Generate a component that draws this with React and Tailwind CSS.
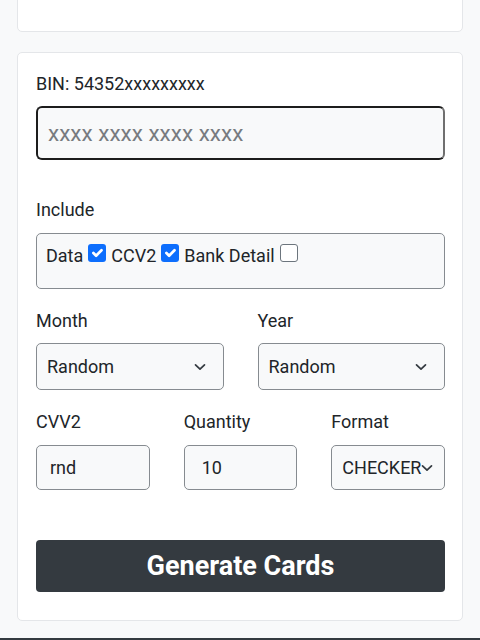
import React from 'react';

const Chevron = ({ right = 'right-[17px]' }) => (
  <svg
    className={`absolute ${right} top-1/2 -translate-y-1/2`}
    width="12"
    height="8"
    viewBox="0 0 12 8"
    fill="none"
    stroke="#343a40"
    strokeWidth="1.7"
    strokeLinecap="round"
    strokeLinejoin="round"
  >
    <path d="M1.5 1.8l4.5 4.4 4.5-4.4" />
  </svg>
);

const Check = ({ checked }) =>
  checked ? (
    <span className="mt-[2px] w-[18px] h-[18px] rounded-[3px] bg-[#0d6efd] flex items-center justify-center shrink-0">
      <svg width="18" height="18" viewBox="0 0 20 20" fill="none" stroke="#fff" strokeWidth="3" strokeLinecap="round" strokeLinejoin="round">
        <path d="M6 10l3 3 6-6" />
      </svg>
    </span>
  ) : (
    <span className="mt-[2px] w-[18px] h-[18px] rounded-[3px] bg-white border border-[#6c757d] shrink-0" />
  );

const FakeSelect = ({ value, className = '', right }) => (
  <div
    className={`relative flex items-center border border-[#868b90] rounded-[5px] bg-[#f8f9fa] pl-[10px] whitespace-nowrap ${className}`}
  >
    <span>{value}</span>
    <Chevron right={right} />
  </div>
);

export default function App() {
  return (
    <div
      className="min-h-[640px] bg-[#f8f9fa] text-[#212529] text-[18px] leading-[27px] overflow-hidden"
      style={{ fontFamily: 'Roboto, "Liberation Sans", sans-serif' }}
    >
      {/* previous card (cut off) */}
      <div className="mx-[17px] mt-[-12px] h-[44px] bg-white border border-[#e4e6e9] rounded-[5px]" />

      <div className="mx-[17px] mt-[20px] bg-white border border-[#e4e6e9] rounded-[5px] pl-[18px] pr-[17px] pt-[17px] pb-[28px]">
        <p className="mb-[9px]">BIN: 54352xxxxxxxxx</p>
        <div className="h-[54px] border-2 border-[#1c1c1c] border-r-[#6f6f6f] rounded-[6px] bg-[#f8f9fa] flex items-center px-[10px]">
          <span className="text-[22.5px] text-[#777b80]">xxxx xxxx xxxx xxxx</span>
        </div>

        <p className="mt-[36px] mb-[10px]">Include</p>
        <div className="h-[56px] border border-[#868b90] rounded-[5px] bg-[#f8f9fa] pt-[8px] px-[9px] flex items-start gap-[5px]">
          <span>Data</span>
          <Check checked />
          <span>CCV2</span>
          <Check checked />
          <span>Bank Detail</span>
          <Check checked={false} />
        </div>

        <div className="grid grid-cols-2 gap-x-[34px] mt-[18px]">
          <div>
            <p className="mb-[9px]">Month</p>
            <FakeSelect value="Random" className="h-[47px]" />
          </div>
          <div>
            <p className="mb-[9px]">Year</p>
            <FakeSelect value="Random" className="h-[47px]" />
          </div>
        </div>

        <div className="grid grid-cols-3 gap-x-[34px] mt-[18px]">
          <div>
            <p className="mb-[10px]">CVV2</p>
            <div className="h-[45px] border border-[#868b90] rounded-[5px] bg-[#f8f9fa] flex items-center pl-[13px]">rnd</div>
          </div>
          <div>
            <p className="mb-[10px]">Quantity</p>
            <div className="h-[45px] border border-[#868b90] rounded-[5px] bg-[#f8f9fa] flex items-center pl-[17px]">10</div>
          </div>
          <div>
            <p className="mb-[10px]">Format</p>
            <FakeSelect value="CHECKER" className="h-[45px]" right="right-[11px]" />
          </div>
        </div>

        <button className="mt-[50px] w-full h-[52px] rounded-[4px] bg-[#343a40] text-white text-[27px] font-bold leading-none flex items-center justify-center">
          Generate Cards
        </button>
      </div>

      <div className="mt-[17px] h-[4px] bg-[#343a40]" />
    </div>
  );
}
